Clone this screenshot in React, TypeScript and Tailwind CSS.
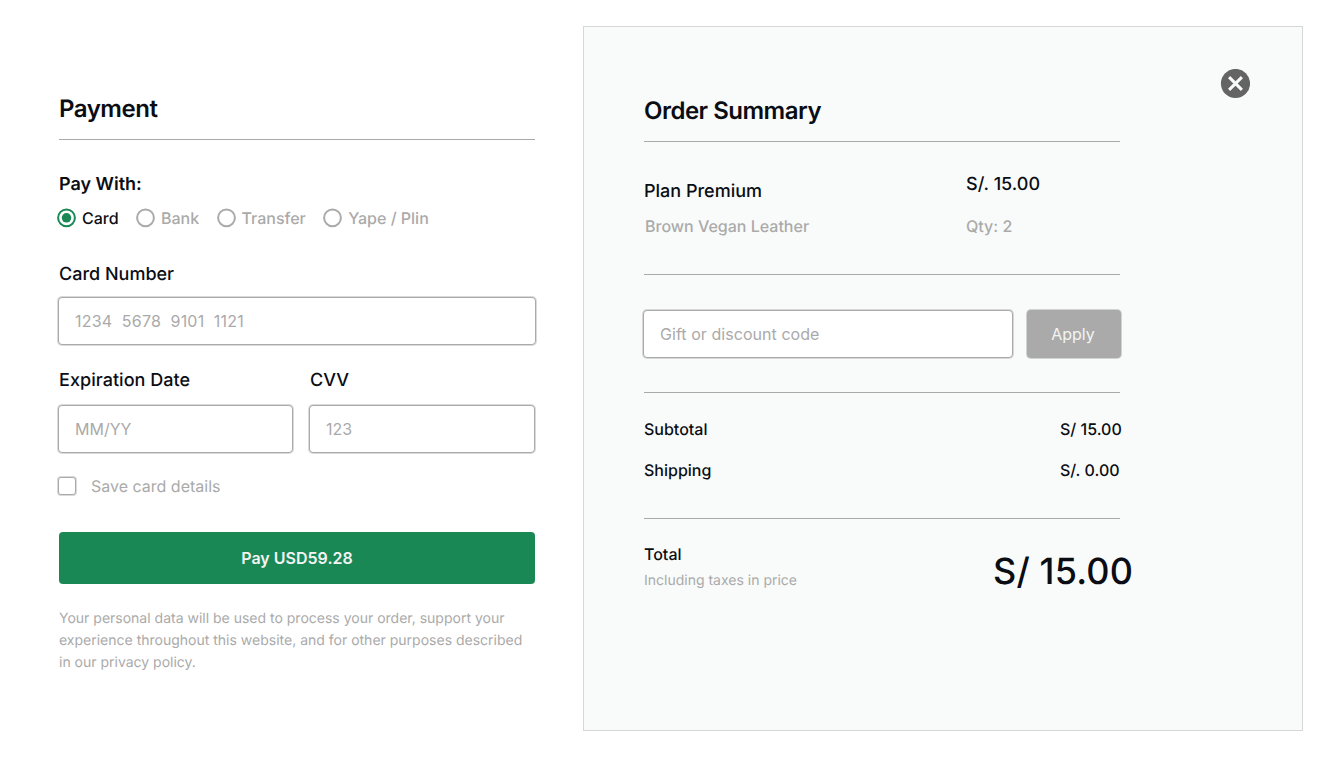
import React from "react";

const outline = "border border-[#aaaaaa] bg-white shadow-[0_0_0_1px_#aaaaaa70]";
const field =
  "h-12 rounded-[4px] px-[16px] text-[16px] text-[#0a0d13] outline-none placeholder:text-[#aaaaaa] placeholder:opacity-100 " +
  outline;

function Rule({ className = "" }: { className?: string }) {
  return <div className={"h-px w-[476px] bg-[#aaaaaa] " + className} />;
}

function Radio({ label, checked = false }: { label: string; checked?: boolean }) {
  return (
    <label
      className={
        "flex items-center gap-[5px] text-[16px] leading-5 font-medium " +
        (checked ? "text-[#0a0d13]" : "text-[#aaaaaa]")
      }
    >
      <svg
        width="20"
        height="20"
        viewBox="0 0 20 20"
        fill="none"
        className={checked ? "text-[#1a8855]" : "text-[#aaaaaa]"}
      >
        <circle cx="9.5" cy="9.8" r="8.4" stroke="currentColor" strokeWidth="2" fill="white" />
        {checked && <circle cx="9.5" cy="9.8" r="4.75" fill="currentColor" />}
      </svg>
      <span className="whitespace-nowrap">{label}</span>
    </label>
  );
}

function Payment() {
  return (
    <section className="flex w-[583px] flex-col pt-[93px] pl-[59px]">
      <h1 className="text-[24px] leading-8 font-semibold tracking-[-0.48px]">Payment</h1>
      <Rule className="mt-[14px]" />

      <h2 className="mt-[33px] text-[18px] leading-6 font-semibold">Pay With:</h2>
      <div className="mt-[11px] -ml-[2px] flex h-5 gap-[17.4px]">
        <Radio label="Card" checked />
        <Radio label="Bank" />
        <Radio label="Transfer" />
        <Radio label="Yape / Plin" />
      </div>

      <label className="mt-[35px] text-[18px] leading-6 font-medium">Card Number</label>
      <input
        className={"mt-[10px] -ml-px w-[478px] tracking-[0.22px] " + field}
        placeholder="1234  5678  9101  1121"
      />

      <div className="mt-6 -ml-px flex gap-4">
        <div className="flex w-[235px] flex-col">
          <label className="pl-px text-[18px] leading-6 font-medium tracking-[0.04px]">
            Expiration Date
          </label>
          <input className={"mt-[12px] w-full " + field} placeholder="MM/YY" />
        </div>
        <div className="flex w-[226px] flex-col">
          <label className="pl-px text-[18px] leading-6 font-medium">CVV</label>
          <input className={"mt-[12px] w-full " + field} placeholder="123" />
        </div>
      </div>

      <label className="mt-6 -ml-px flex items-center gap-[15px] text-[16px] leading-[18px] text-[#aaaaaa]">
        <span className={"size-[18px] rounded-[3px] " + outline} />
        Save card details
      </label>

      <button className="mt-[37px] h-[52px] w-[476px] rounded-[4px] bg-[#1a8855] text-[16px] font-semibold text-[#f2f4f3]">
        Pay USD59.28
      </button>

      <p className="mt-[24px] text-[14px] leading-[22px] whitespace-nowrap text-[#aaaaaa]">
        Your personal data will be used to process your order, support your
        <br />
        experience throughout this website, and for other purposes described
        <br />
        in our privacy policy.
      </p>
    </section>
  );
}

function OrderSummary() {
  return (
    <section className="mt-[26px] flex h-[705px] w-[720px] justify-between border border-[#d6d8d7] bg-[#f9fbfa] pr-[52px] pl-[60px]">
      <div className="flex w-[476px] flex-col pt-[68px]">
        <h1 className="text-[24px] leading-8 font-semibold tracking-[-0.5px]">Order Summary</h1>
        <Rule className="mt-[14px]" />

        <div className="flex h-[132px] justify-between">
          <div className="pt-[38px]">
            <div className="text-[18px] leading-6 font-medium">Plan Premium</div>
            <div className="mt-[10px] ml-px text-[16px] leading-6 font-medium text-[#aaaaaa]">
              Brown Vegan Leather
            </div>
          </div>
          <div className="w-[154px] pt-[31px]">
            <div className="text-[18px] leading-6 font-medium">S/. 15.00</div>
            <div className="mt-[17px] text-[16px] leading-6 font-medium text-[#aaaaaa]">Qty: 2</div>
          </div>
        </div>
        <Rule />

        <div className="mt-[35px] -ml-px flex w-[478px] justify-between">
          <input
            className={"w-[370px] tracking-[0.05px] " + field}
            placeholder="Gift or discount code"
          />
          <button className="h-12 w-[94px] rounded-[4px] bg-[#aaaaaa] pr-[2px] text-[16px] text-[#f2f4f3] shadow-[0_0_0_1px_#aaaaaa80]">
            Apply
          </button>
        </div>
        <Rule className="mt-[34px]" />

        <div className="flex h-[125px] justify-between pt-6 text-[16px] leading-6 font-medium">
          <div className="flex flex-col gap-[17px]">
            <div>Subtotal</div>
            <div>Shipping</div>
          </div>
          <div className="flex w-[60px] flex-col gap-[17px] whitespace-nowrap">
            <div>S/ 15.00</div>
            <div>S/. 0.00</div>
          </div>
        </div>
        <Rule />

        <div className="flex justify-between">
          <div className="pt-[23px]">
            <div className="text-[16px] leading-6 font-medium">Total</div>
            <div className="mt-[3px] text-[14px] leading-6 text-[#aaaaaa]">Including taxes in price</div>
          </div>
          <div className="w-[127px] pt-[30px] text-[36px] leading-[44px] font-medium tracking-[0.15px] whitespace-nowrap">
            S/ 15.00
          </div>
        </div>
      </div>

      <button className="mt-[42px] size-[30px]" aria-label="Close">
        <svg width="30" height="30" viewBox="0 0 30 30" fill="none">
          <circle cx="15.5" cy="14.5" r="14.6" fill="#646464" />
          <path d="M9.1 8.1l12.8 12.8M21.9 8.1L9.1 20.9" stroke="#f9fbfa" strokeWidth="3" />
        </svg>
      </button>
    </section>
  );
}

export default function App() {
  return (
    <main className="flex h-[773px] w-[1337px] overflow-hidden bg-white font-['Inter',sans-serif] text-[#0a0d13] antialiased [text-rendering:geometricPrecision]">
      <Payment />
      <OrderSummary />
    </main>
  );
}
